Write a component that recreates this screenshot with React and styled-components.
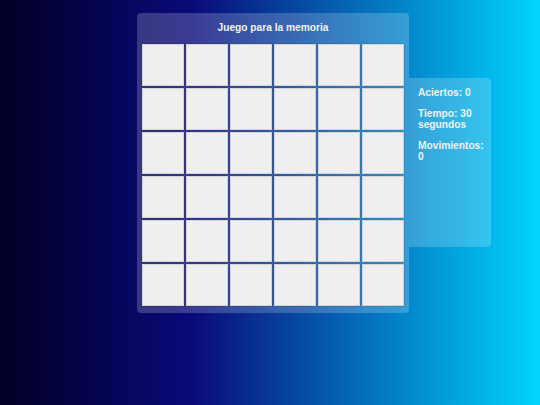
import React from "react";
import styled, { createGlobalStyle } from "styled-components";

const Global = createGlobalStyle`
  html, body { margin: 0; padding: 0; }
  body {
    min-height: 100vh;
    background: linear-gradient(90deg, #020024 0%, #090979 35%, #00d4ff 100%);
    font-family: "Liberation Sans", Arial, sans-serif;
    color: #ffffff;
  }
`;

const Page = styled.div`
  display: grid;
  grid-template-columns: 1fr auto 1fr;
  padding: 13px 0 0 6px;
  min-height: 100vh;
  box-sizing: border-box;
  align-items: start;
`;

const Board = styled.div`
  grid-column: 2;
  width: 272px;
  box-sizing: border-box;
  padding: 9px 5px 7px 5px;
  background: rgba(255, 255, 255, 0.2);
  border-radius: 4px;
  display: flex;
  flex-direction: column;
  gap: 10px;
`;

const Title = styled.h1`
  margin: 0;
  font-size: 10.2px;
  line-height: 11.5px;
  font-weight: 700;
  text-align: center;
  color: #f2f2f2;
`;

const Grid = styled.div`
  display: grid;
  grid-template-columns: repeat(6, 42px);
  grid-auto-rows: 42px;
  gap: 2px;
`;

const Card = styled.div`
  box-sizing: border-box;
  background: #efefef;
  border: 1px solid #d4d4d8;
  box-shadow: 0 0 1.5px rgba(10, 10, 60, 0.35);
`;

const Stats = styled.div`
  grid-column: 3;
  justify-self: start;
  margin-top: 65px;
  width: 82px;
  height: 169px;
  box-sizing: border-box;
  padding: 9px 6px 0 9px;
  background: rgba(255, 255, 255, 0.2);
  border-radius: 0 4px 4px 0;
  display: flex;
  flex-direction: column;
  gap: 9px;
`;

const Stat = styled.p`
  margin: 0;
  font-size: 10.2px;
  line-height: 11.5px;
  font-weight: 700;
  color: #f2f2f2;
`;

export default function App() {
  const cards = Array.from({ length: 36 }, (_, i) => i);
  return (
    <>
      <Global />
      <Page>
        <Board>
          <Title>Juego para la memoria</Title>
          <Grid>
            {cards.map((i) => (
              <Card key={i} />
            ))}
          </Grid>
        </Board>
        <Stats>
          <Stat>Aciertos: 0</Stat>
          <Stat>Tiempo: 30 segundos</Stat>
          <Stat>Movimientos: 0</Stat>
        </Stats>
      </Page>
    </>
  );
}
